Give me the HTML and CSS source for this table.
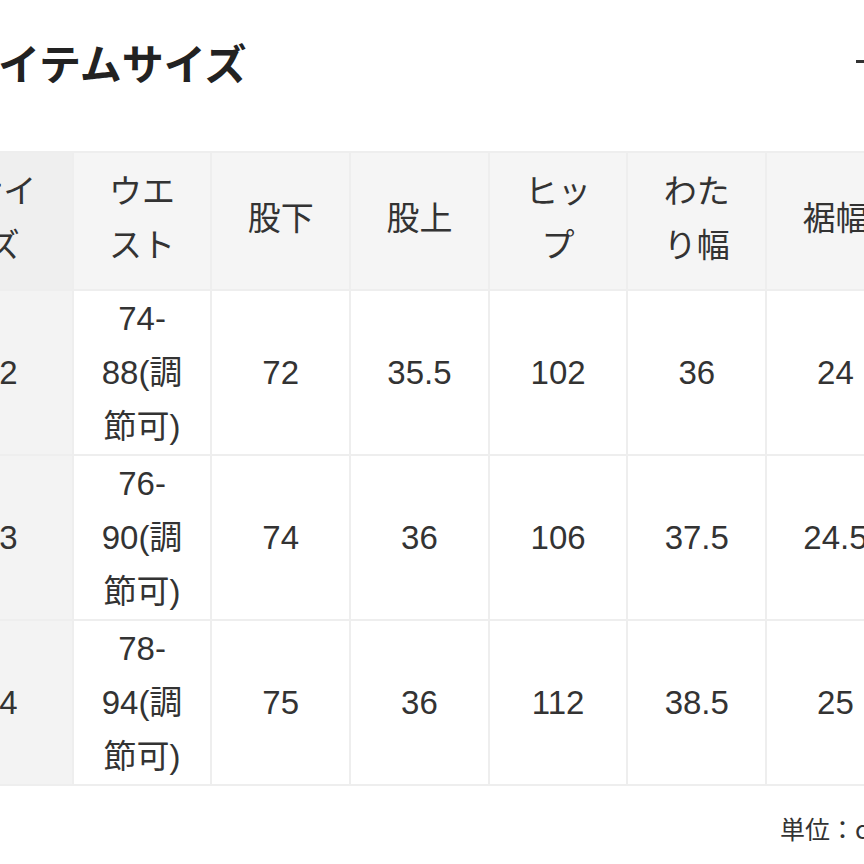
FILE: index.html
```html
<!DOCTYPE html>
<html lang="ja">
<head>
<meta charset="utf-8">
<title>アイテムサイズ</title>
<link rel="stylesheet" href="styles.css">
</head>
<body>
<div class="page">
  <div class="head">
    <h2 class="title">アイテムサイズ</h2>
    <span class="toggle" aria-hidden="true"></span>
  </div>
  <table class="size-table">
    <thead>
      <tr>
        <th class="first">サイ<br>ズ</th>
        <th>ウエ<br>スト</th>
        <th>股下</th>
        <th>股上</th>
        <th>ヒッ<br>プ</th>
        <th>わた<br>り幅</th>
        <th>裾幅</th>
      </tr>
    </thead>
    <tbody>
      <tr>
        <td class="first">2</td>
        <td>74-<br>88(調<br>節可)</td>
        <td>72</td>
        <td>35.5</td>
        <td>102</td>
        <td>36</td>
        <td>24</td>
      </tr>
      <tr>
        <td class="first">3</td>
        <td>76-<br>90(調<br>節可)</td>
        <td>74</td>
        <td>36</td>
        <td>106</td>
        <td>37.5</td>
        <td>24.5</td>
      </tr>
      <tr>
        <td class="first">4</td>
        <td>78-<br>94(調<br>節可)</td>
        <td>75</td>
        <td>36</td>
        <td>112</td>
        <td>38.5</td>
        <td>25</td>
      </tr>
    </tbody>
  </table>
  <p class="unit">単位：cm</p>
</div>
</body>
</html>
```

FILE: styles.css
```css
html, body {
  margin: 0;
  padding: 0;
  background: #ffffff;
}
body {
  width: 864px;
  height: 864px;
  overflow: hidden;
  font-family: "Noto Sans CJK JP", "Noto Sans", sans-serif;
  color: #333333;
}
.page {
  margin-left: -67px;
  width: 1040px;
  padding-top: 35px;
}
.head {
  position: relative;
  display: flex;
  align-items: center;
  height: 54px;
  padding-left: 25px;
}
.title {
  margin: 0;
  font-size: 42px;
  line-height: 54px;
  font-weight: 700;
  color: #222222;
  letter-spacing: 0;
}
.toggle {
  position: absolute;
  left: 923px;
  top: 25px;
  width: 22px;
  height: 3px;
  background: #333333;
}
.size-table {
  margin-top: 62px;
  border-collapse: collapse;
  table-layout: fixed;
  width: 971px;
}
.size-table th,
.size-table td {
  box-sizing: border-box;
  width: 138.7px;
  border: 2px solid #eeeeee;
  text-align: center;
  vertical-align: middle;
  font-family: "Liberation Sans", "Noto Sans CJK JP", sans-serif;
  font-size: 33px;
  line-height: 54px;
  font-weight: 400;
  padding: 0 2px;
  color: #333333;
}
.size-table thead tr {
  height: 138px;
}
.size-table th {
  background: #f5f5f5;
  padding-bottom: 5px;
}
.size-table th.first {
  background: #efefef;
}
.size-table tbody tr {
  height: 165px;
}
.size-table td {
  background: #ffffff;
}
.size-table td.first {
  background: #f3f3f3;
  padding-left: 12px;
}
.unit {
  margin: 24px 0 0;
  width: 958px;
  text-align: right;
  font-size: 25px;
  line-height: 36px;
  color: #333333;
}
```
